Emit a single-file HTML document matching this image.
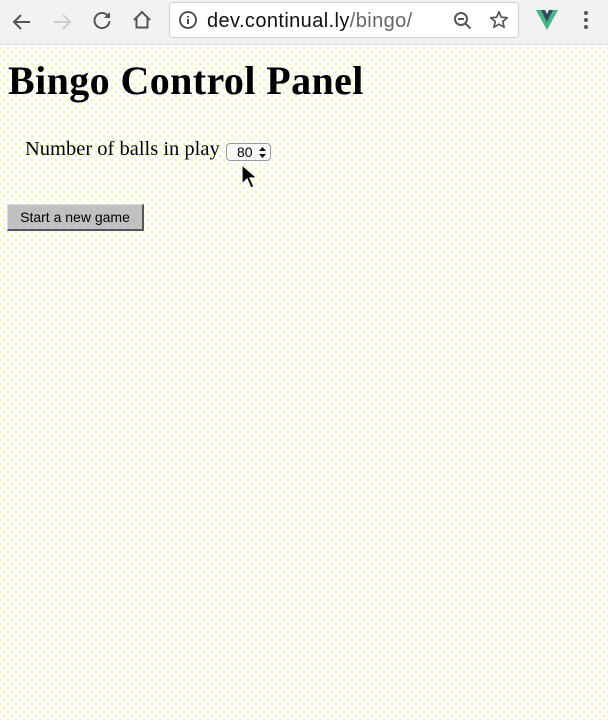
<!DOCTYPE html>
<html><head><meta charset="utf-8"><style>
html,body{margin:0;padding:0;width:608px;height:720px;overflow:hidden;
background-color:#fff;background-image:radial-gradient(circle,#f3f07a 0.8px,transparent 1.2px),radial-gradient(circle,#f3f07a 0.8px,transparent 1.2px);background-size:8px 8px;background-position:0 0,4px 4px;
font-family:"Liberation Serif",serif;}
.bar{position:absolute;left:0;top:0;width:608px;height:44px;background:#f2f2f2;border-bottom:1px solid #d8d8d8;}
.url{position:absolute;left:169px;top:2px;width:350px;height:36px;background:#fff;border:1px solid #d0d0d0;border-radius:4px;box-sizing:border-box;}
.url span{position:absolute;left:37px;top:7px;font:20px "Liberation Sans",sans-serif;color:#111;letter-spacing:0.4px}
.url span i{font-style:normal;color:#666}
svg{position:absolute}
h1{position:absolute;left:8px;top:57px;margin:0;font-size:40px;font-weight:bold;letter-spacing:0.4px}
.lbl{position:absolute;left:25px;top:138px;font-size:20.5px;}
.sel{position:absolute;left:226px;top:143px;width:45px;height:18px;border:1px solid #999;border-radius:4px;background:#fafafa;box-sizing:border-box;font:14px "Liberation Sans",sans-serif;}
.sel b{font-weight:normal;position:absolute;left:10px;top:0px}
.btn{position:absolute;left:7px;top:204px;width:137px;height:27px;background:#c0c0c0;border-top:1px solid #ddd;border-left:1px solid #ddd;border-right:2px solid #555;border-bottom:2px solid #555;box-sizing:border-box;font:14px "Liberation Sans",sans-serif;color:#000;text-align:center;line-height:24px;}
</style></head><body>
<div class="bar">
<svg style="left:10px;top:10px" width="24" height="24" viewBox="0 0 24 24"><path d="M20 12H5M11 5l-7 7 7 7" stroke="#555" stroke-width="2" fill="none"/></svg>
<svg style="left:50px;top:10px" width="24" height="24" viewBox="0 0 24 24"><path d="M4 12h15M13 5l7 7-7 7" stroke="#ccc" stroke-width="2" fill="none"/></svg>
<svg style="left:90px;top:8px" width="24" height="24" viewBox="0 0 24 24"><path d="M18 8A7.5 7.5 0 1 0 19.5 13" stroke="#555" stroke-width="2" fill="none"/><path d="M20 4v6h-6z" fill="#555"/></svg>
<svg style="left:130px;top:8px" width="24" height="24" viewBox="0 0 24 24"><path d="M4 12L12 4l8 8M6.5 10v9.5h11V10" stroke="#555" stroke-width="2" fill="none"/></svg>
<div class="url"><svg style="left:8px;top:7px" width="20" height="20" viewBox="0 0 20 20"><circle cx="10" cy="10" r="8" stroke="#444" stroke-width="1.8" fill="none"/><path d="M10 9v5M10 6v1.5" stroke="#444" stroke-width="2"/></svg>
<span>dev.continual.ly<i>/bingo/</i></span>
<svg style="left:282px;top:7px" width="22" height="22" viewBox="0 0 22 22"><circle cx="9" cy="9" r="6" stroke="#555" stroke-width="2" fill="none"/><path d="M13.5 13.5l5 5M6 9h6" stroke="#555" stroke-width="2"/></svg>
<svg style="left:318px;top:6px" width="22" height="22" viewBox="0 0 24 24"><path d="M12 3l2.6 6 6.4.5-4.9 4.2 1.5 6.3L12 16.6 6.4 20l1.5-6.3L3 9.5 9.4 9z" stroke="#555" stroke-width="1.8" fill="none" stroke-linejoin="round"/></svg>
</div>
<svg style="left:535px;top:9px" width="24" height="22" viewBox="0 0 24 22"><path d="M1 1h8l3 6 3-6h8L12 21z" fill="#41b883"/><path d="M6 1h4l2 4 2-4h4L12 13z" fill="#35495e"/></svg>
<svg style="left:582px;top:9px" width="8" height="24" viewBox="0 0 8 24"><circle cx="4" cy="4" r="2" fill="#555"/><circle cx="4" cy="11" r="2" fill="#555"/><circle cx="4" cy="18" r="2" fill="#555"/></svg>
</div>
<h1>Bingo Control Panel</h1>
<div class="lbl">Number of balls in play</div>
<div class="sel"><b>80</b><svg style="left:32px;top:3px" width="7" height="11" viewBox="0 0 7 11"><path d="M3.5 0L7 4H0zM3.5 11L0 7h7z" fill="#111"/></svg></div>
<svg style="left:241px;top:164px" width="18" height="26" viewBox="0 0 18 26"><path d="M1 1v19l5-5 4 9 3-1.5-4-8.5h7z" fill="#000" stroke="#fff" stroke-width="1.2"/></svg>
<div class="btn">Start a new game</div>
</body></html>
